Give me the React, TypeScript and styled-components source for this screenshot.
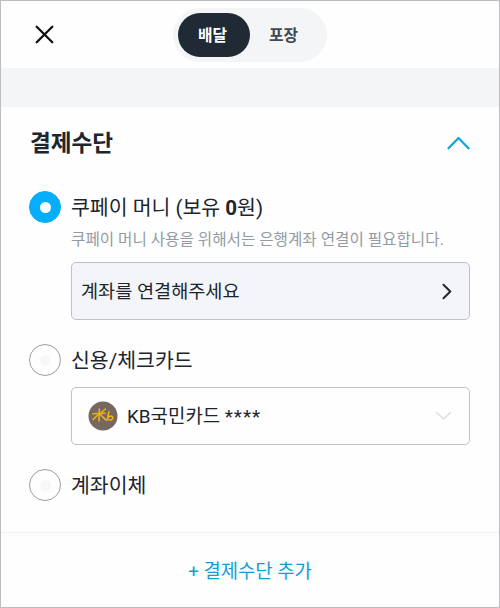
import React from "react";
import styled, { createGlobalStyle } from "styled-components";

const GlobalStyle = createGlobalStyle`
  * { box-sizing: border-box; }
  body { margin: 0; background: #fff; }
  button { font: inherit; color: inherit; background: none; border: 0; padding: 0; margin: 0; }
`;

const Screen = styled.main`
  display: flex;
  flex-direction: column;
  width: 500px;
  height: 608px;
  border: 1px solid #bdbdbf;
  background: #fefefe;
  color: #1d252e;
  font-family: Roboto, "Noto Sans CJK KR", sans-serif;
  overflow: hidden;
`;

const Header = styled.header`
  display: grid;
  grid-template-columns: 172px 154px 1fr;
  align-items: center;
  height: 67px;
  flex: none;
`;

const CloseButton = styled.button`
  display: flex;
  padding-left: 34px;
`;

const Toggle = styled.div`
  display: flex;
  align-items: center;
  height: 54px;
  padding: 5px;
  border-radius: 27px;
  background: #f3f5f7;
`;

const ToggleOption = styled.button<{ $active?: boolean }>`
  width: ${(p) => (p.$active ? 72 : 70)}px;
  height: 44px;
  padding: 1px 3px 0 0;
  border-radius: 22px;
  background: ${(p) => (p.$active ? "#1f2a35" : "transparent")};
  color: ${(p) => (p.$active ? "#fff" : "#414a54")};
  font-size: 15.8px;
  font-weight: 700;
  line-height: 43px;
`;

const Band = styled.div`
  height: 39px;
  flex: none;
  background: #f3f5f7;
`;

const Section = styled.section`
  height: 425px;
  flex: none;
  padding: 0 29px 0 28px;
`;

const SectionHeader = styled.div`
  display: flex;
  align-items: center;
  justify-content: space-between;
  height: 72px;
  margin-bottom: 12px;
`;

const Title = styled.h1`
  margin: 0;
  padding: 2px 0 0 1px;
  font-size: 22.6px;
  font-weight: 700;
  line-height: 32px;
`;

const Method = styled.div`
  display: grid;
  grid-template-columns: 32px 1fr;
  column-gap: 10px;
  margin-bottom: 24px;
`;

const Radio = styled.span<{ $checked?: boolean }>`
  display: flex;
  align-items: center;
  justify-content: center;
  width: 32px;
  height: 32px;
  border-radius: 50%;
  border: 1px solid ${(p) => (p.$checked ? "#06adfb" : "#9a9fa3")};
  background: ${(p) => (p.$checked ? "#06adfb" : "#fefefe")};

  &::after {
    content: "";
    width: 11px;
    height: 11px;
    border-radius: 50%;
    background: ${(p) => (p.$checked ? "#fff" : "#f6f7f8")};
  }
`;

const Label = styled.div`
  height: 32px;
  font-size: 20.5px;
  line-height: 34px;
  white-space: nowrap;
`;

const Detail = styled.div<{ $spaced?: boolean }>`
  grid-column: 2;
  padding-top: ${(p) => (p.$spaced ? 11 : 0)}px;
`;

const Hint = styled.p`
  height: 32px;
  margin: 0 0 7px;
  color: #929aa2;
  font-size: 15.65px;
  line-height: 34px;
  white-space: nowrap;
`;

const Field = styled.button<{ $filled?: boolean }>`
  display: flex;
  align-items: center;
  width: 399px;
  height: 58px;
  padding: 0 ${(p) => (p.$filled ? "17px 0 9px" : "17px 0 16px")};
  border: 1px solid #bfc3c8;
  border-radius: 5px;
  background: ${(p) => (p.$filled ? "#f3f5f8" : "#fefefe")};
  font-size: ${(p) => (p.$filled ? 18.6 : 18.9)}px;
  line-height: 32px;
  white-space: nowrap;
`;

const FieldText = styled.span`
  flex: 1;
  padding-top: 2px;
  text-align: left;
`;

const Masked = styled.span`
  letter-spacing: 0.9px;
`;

const CardLogo = styled.svg`
  flex: none;
  margin-right: 9px;
`;

const Footer = styled.footer`
  display: flex;
  align-items: center;
  justify-content: center;
  flex: 1;
  border-top: 1px solid #eeeff0;
`;

const AddButton = styled.button`
  padding-top: 3px;
  color: #149dd2;
  font-size: 18.8px;
  line-height: 32px;
`;

type StrokeProps = { w: number; h: number; d: string; color: string; weight?: number };

const StrokeIcon = ({ w, h, d, color, weight = 2 }: StrokeProps) => (
  <svg width={w} height={h} viewBox={`0 0 ${w} ${h}`} fill="none" stroke={color} strokeWidth={weight} strokeLinecap="round" strokeLinejoin="round">
    <path d={d} />
  </svg>
);

const KbLogo = () => (
  <CardLogo width="30" height="30" viewBox="0 0 30 30" fill="none">
    <circle cx="15" cy="15" r="14.5" fill="#75685f" />
    <g stroke="#edb019" strokeWidth="1.6" strokeLinecap="round" strokeLinejoin="round">
      <path d="M5 12.8 17 12.2" />
      <path d="M11.4 8 11 20" />
      <path d="M10.8 13 5.2 18.4" />
      <path d="M17.4 8 11.8 13 18.4 19.4" />
      <path d="M20.8 10.8 19.4 18.4C22.6 20 25.4 18.4 24.8 16.2 23.8 14.4 21 15 19.8 16.8" />
    </g>
  </CardLogo>
);

export default function App() {
  return (
    <>
      <GlobalStyle />
      <Screen>
        <Header>
          <CloseButton aria-label="닫기">
            <StrokeIcon w={19} h={19} d="M1.7 1.7 17.3 17.3M17.3 1.7 1.7 17.3" color="#111" weight={2.3} />
          </CloseButton>
          <Toggle>
            <ToggleOption $active>배달</ToggleOption>
            <ToggleOption>포장</ToggleOption>
          </Toggle>
        </Header>
        <Band />
        <Section>
          <SectionHeader>
            <Title>결제수단</Title>
            <StrokeIcon w={23} h={14} d="M1.5 12.2 11.5 2 21.5 12.2" color="#14a3da" weight={2.3} />
          </SectionHeader>
          <Method>
            <Radio $checked />
            <Label>쿠페이 머니 (보유 <b>0</b>원)</Label>
            <Detail>
              <Hint>쿠페이 머니 사용을 위해서는 은행계좌 연결이 필요합니다.</Hint>
              <Field $filled>
                <FieldText>계좌를 연결해주세요</FieldText>
                <StrokeIcon w={10} h={17} d="M1.5 1.8 8.3 8.5 1.5 15.2" color="#20272e" />
              </Field>
            </Detail>
          </Method>
          <Method>
            <Radio />
            <Label>신용/체크카드</Label>
            <Detail $spaced>
              <Field>
                <KbLogo />
                <FieldText>KB국민카드 <Masked>****</Masked></FieldText>
                <StrokeIcon w={17} h={10} d="M1.5 1.5 8.5 8 15.5 1.5" color="#dcdedf" weight={1.5} />
              </Field>
            </Detail>
          </Method>
          <Method>
            <Radio />
            <Label>계좌이체</Label>
          </Method>
        </Section>
        <Footer>
          <AddButton>+ 결제수단 추가</AddButton>
        </Footer>
      </Screen>
    </>
  );
}
